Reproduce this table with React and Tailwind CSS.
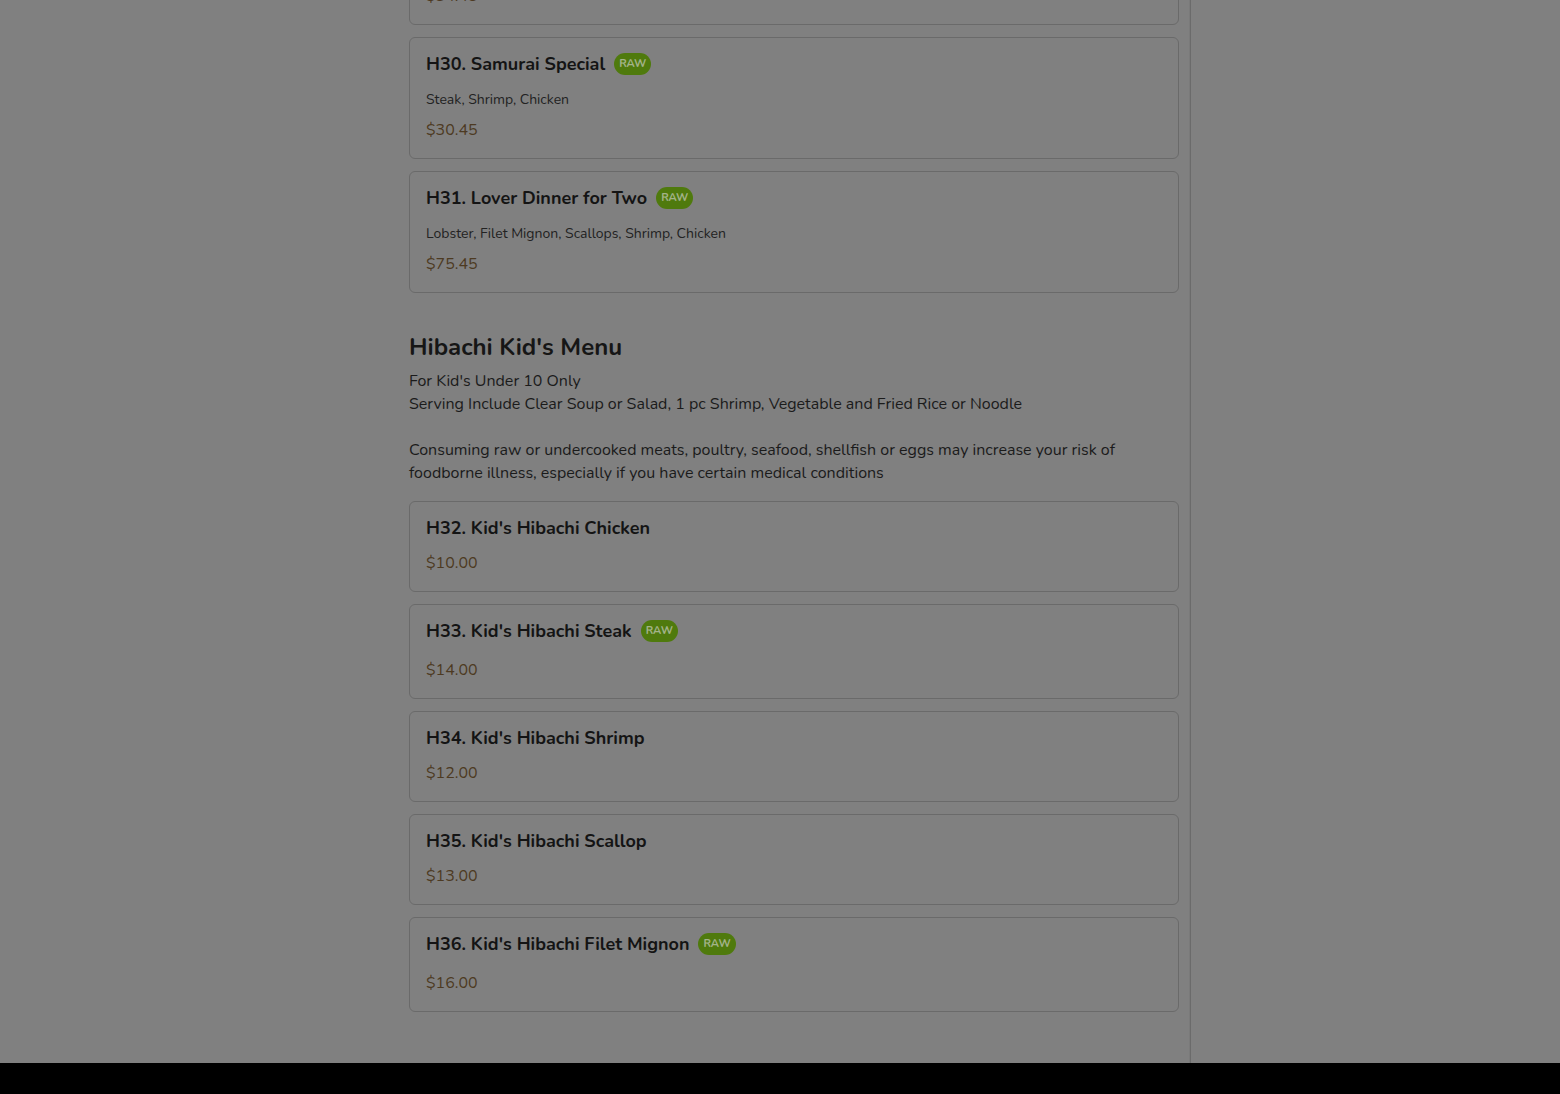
const hibachi = [
  { code: 'H29', name: 'Emperor Special', desc: 'Lobster, Steak, Shrimp', price: '$34.45', raw: true },
  { code: 'H30', name: 'Samurai Special', desc: 'Steak, Shrimp, Chicken', price: '$30.45', raw: true },
  { code: 'H31', name: 'Lover Dinner for Two', desc: 'Lobster, Filet Mignon, Scallops, Shrimp, Chicken', price: '$75.45', raw: true },
]

const kids = [
  { code: 'H32', name: "Kid's Hibachi Chicken", price: '$10.00' },
  { code: 'H33', name: "Kid's Hibachi Steak", price: '$14.00', raw: true },
  { code: 'H34', name: "Kid's Hibachi Shrimp", price: '$12.00' },
  { code: 'H35', name: "Kid's Hibachi Scallop", price: '$13.00' },
  { code: 'H36', name: "Kid's Hibachi Filet Mignon", price: '$16.00', raw: true },
]

function RawBadge() {
  return (
    <span className="ml-[9px] inline-flex items-center h-[22px] px-[5px] rounded-full bg-[#4f7a0d] text-[#a3b389] text-[11px] font-bold">
      RAW
    </span>
  )
}

function ItemCard({ item }) {
  // raw rows are taller (badge); without a description the price sits 1px lower
  const rowCls = item.raw
    ? (item.desc ? 'h-6 mb-[14px]' : 'h-6 mb-[15px]')
    : 'h-5 mb-[13px]'
  return (
    <div className={`border border-[#6a6a6a] rounded-md px-4 pb-4 ${item.raw ? 'pt-[14px]' : 'pt-4'}`}>
      <div className={`flex items-center ${rowCls}`}>
        <h3 className="text-[18px] font-bold text-[#141414] leading-5">
          {item.code}. {item.name}
        </h3>
        {item.raw && <RawBadge />}
      </div>
      {item.desc && (
        <p className="text-sm leading-5 text-[#222222] mb-2">{item.desc}</p>
      )}
      <p className="text-base leading-6 text-[#4d3a22]">{item.price}</p>
    </div>
  )
}

export default function App() {
  return (
    <div className="h-[1094px] bg-[#808080] flex flex-col overflow-hidden font-['Nunito','Lato','Noto_Sans',sans-serif]">
      <div className="flex-1 overflow-hidden flex justify-center">
        <div className="w-[822px] pl-[40px] border-r border-[#6b6b6b] flex">
          <div className="w-[771px] flex flex-col">
            <div className="flex flex-col gap-3 -mt-[97px]">
              {hibachi.map(item => <ItemCard key={item.code} item={item} />)}
            </div>

            <h2 className="mt-[38px] text-2xl leading-8 font-bold text-[#161616]">Hibachi Kid's Menu</h2>
            <div className="mt-[7px] text-base leading-[23px] text-[#1b1b1b]">
              <p>For Kid's Under 10 Only</p>
              <p>Serving Include Clear Soup or Salad, 1 pc Shrimp, Vegetable and Fried Rice or Noodle</p>
              <p className="h-[23px]"></p>
              <p>Consuming raw or undercooked meats, poultry, seafood, shellfish or eggs may increase your risk of foodborne illness, especially if you have certain medical conditions</p>
            </div>

            <div className="mt-4 flex flex-col gap-3">
              {kids.map(item => <ItemCard key={item.code} item={item} />)}
            </div>
          </div>
          <div className="w-[11px] border-r border-[#7a7a7a]" />
        </div>
      </div>
      <div className="h-[31px] bg-black shrink-0" />
    </div>
  )
}
